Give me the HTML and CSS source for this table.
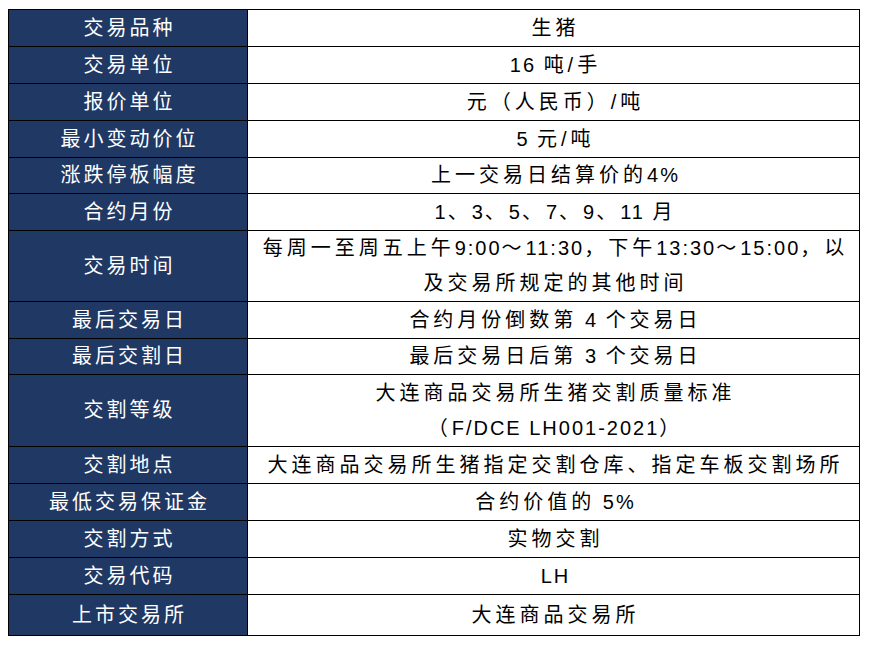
FILE: index.html
```html
<!DOCTYPE html>
<html lang="zh">
<head>
<meta charset="utf-8">
<link rel="stylesheet" href="styles.css">
</head>
<body>
<div class="spec">
  <div class="k">交易品种</div><div class="v"><p class="t">生猪</p></div>
  <div class="k">交易单位</div><div class="v"><p class="t"><span class="n">16 </span>吨/手</p></div>
  <div class="k">报价单位</div><div class="v"><p class="t">元（人民币）/吨</p></div>
  <div class="k">最小变动价位</div><div class="v"><p class="t"><span class="n">5 </span>元/吨</p></div>
  <div class="k">涨跌停板幅度</div><div class="v"><p class="t">上一交易日结算价的<span class="n">4%</span></p></div>
  <div class="k">合约月份</div><div class="v"><p class="t"><span class="n">1</span>、<span class="n">3</span>、<span class="n">5</span>、<span class="n">7</span>、<span class="n">9</span>、<span class="n">11 </span>月</p></div>
  <div class="k">交易时间</div><div class="v"><p class="t">每周一至周五上午<span class="n">9:00</span>～<span class="n">11:30</span>，下午<span class="n">13:30</span>～<span class="n">15:00</span>，以<br>及交易所规定的其他时间</p></div>
  <div class="k">最后交易日</div><div class="v"><p class="t">合约月份倒数第<span class="n"> 4 </span>个交易日</p></div>
  <div class="k">最后交割日</div><div class="v"><p class="t">最后交易日后第<span class="n"> 3 </span>个交易日</p></div>
  <div class="k">交割等级</div><div class="v"><p class="t">大连商品交易所生猪交割质量标准<br>（<span class="n">F/DCE LH001-2021</span>）</p></div>
  <div class="k">交割地点</div><div class="v"><p class="t">大连商品交易所生猪指定交割仓库、指定车板交割场所</p></div>
  <div class="k">最低交易保证金</div><div class="v"><p class="t">合约价值的<span class="n"> 5%</span></p></div>
  <div class="k">交割方式</div><div class="v"><p class="t">实物交割</p></div>
  <div class="k">交易代码</div><div class="v"><p class="t"><span class="n">LH</span></p></div>
  <div class="k">上市交易所</div><div class="v"><p class="t">大连商品交易所</p></div>
</div>
</body>
</html>
```

FILE: styles.css
```css
html, body {
  margin: 0;
  padding: 0;
  background: #ffffff;
}
body {
  padding: 9px 0 0 8px;
  font-family: "Liberation Sans Narrow", "Liberation Sans", "Noto Sans CJK SC", sans-serif;
}
.spec {
  width: 852px;
  box-sizing: border-box;
  display: grid;
  grid-template-columns: 238px 611px;
  grid-template-rows: 36px 36px 36px 36px 35px 36px 70px 36px 35px 71px 36px 36px 36px 36px 40px;
  gap: 1px;
  padding: 1px;
  background: #000000;
}
.k, .v {
  display: flex;
  align-items: center;
  justify-content: center;
  text-align: center;
  font-size: 20px;
  line-height: 35px;
}
.k {
  background: #203864;
  color: #ffffff;
  letter-spacing: 3px;
  padding-left: 3px;
}
.v {
  background: #ffffff;
  color: #000000;
  letter-spacing: 4px;
  padding-left: 4px;
}
.t {
  margin: 0;
}
.n {
  letter-spacing: 2px;
}
```
